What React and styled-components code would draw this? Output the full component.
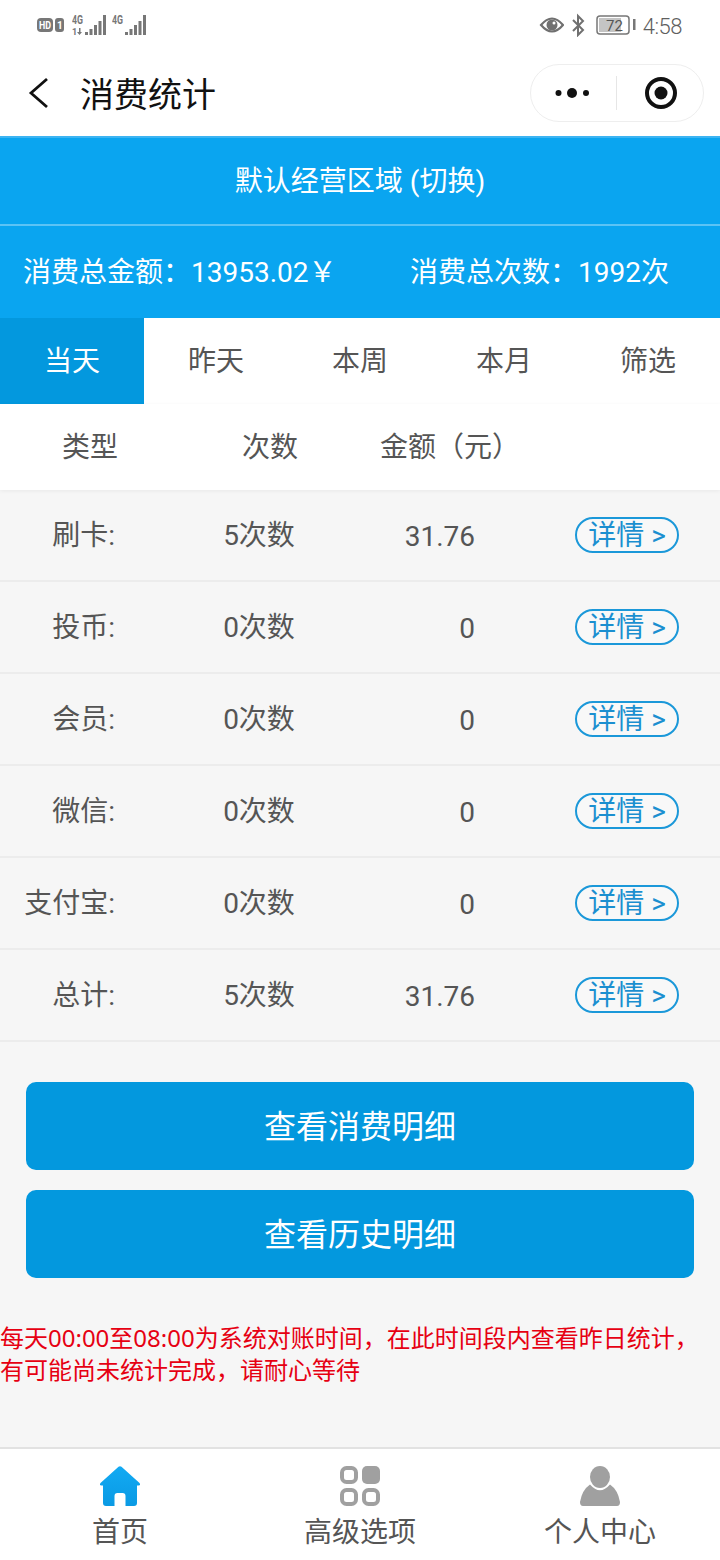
import styled, { createGlobalStyle } from 'styled-components';

const GlobalStyle = createGlobalStyle`
	html, body {
		margin: 0;
		padding: 0;
		background: #f6f6f6;
	}
	* {
		box-sizing: border-box;
	}
`;

const FONT = `Roboto, "Noto Sans CJK SC", sans-serif`;

const rows = [
	{ label: '刷卡:', count: '5次数', amount: '31.76' },
	{ label: '投币:', count: '0次数', amount: '0' },
	{ label: '会员:', count: '0次数', amount: '0' },
	{ label: '微信:', count: '0次数', amount: '0' },
	{ label: '支付宝:', count: '0次数', amount: '0' },
	{ label: '总计:', count: '5次数', amount: '31.76' },
];

const tabs = ['当天', '昨天', '本周', '本月', '筛选'];

const Page = styled.div`
	width: 720px;
	height: 1560px;
	display: flex;
	flex-direction: column;
	font-family: ${FONT};
	background: #f6f6f6;
	overflow: hidden;
`;

const StatusBar = styled.div`
	height: 50px;
	padding: 12px 38px 0 36px;
	display: flex;
	justify-content: space-between;
	align-items: flex-start;
	background: #fff;
	color: #6f6f6f;
`;

const StatusGroup = styled.div`
	display: flex;
	align-items: center;
	gap: ${(p) => p.$gap}px;
	height: 26px;
`;

const Clock = styled.span`
	font-size: 22px;
	font-weight: 300;
	letter-spacing: -0.5px;
	color: #5f5f5f;
	margin-top: 3px;
`;

const NavBar = styled.div`
	height: 86px;
	display: flex;
	align-items: center;
	padding: 0 16px 0 28px;
	background: #fff;
`;

const NavTitle = styled.div`
	margin-left: 28px;
	padding-bottom: 2px;
	font-size: 34px;
	color: #111;
	flex: 1;
`;

const Capsule = styled.div`
	width: 174px;
	height: 58px;
	border: 1px solid #eee;
	border-radius: 29px;
	display: flex;
	align-items: center;
	background: #fff;
`;

const CapsuleSide = styled.div`
	flex: 1;
	display: flex;
	align-items: center;
	justify-content: center;
	height: 34px;
	padding-left: ${(p) => (p.$divided ? 2 : 0)}px;
	border-left: ${(p) => (p.$divided ? '1px solid #e6e6e6' : 'none')};
`;

const RegionBar = styled.div`
	height: 88px;
	border-top: 2px solid #3db4f2;
	padding-bottom: 4px;
	display: flex;
	align-items: center;
	justify-content: center;
	background: #0aa5f0;
	color: #fff;
	font-size: 28px;
`;

const Totals = styled.div`
	height: 94px;
	border-top: 2px solid #5cc3f5;
	padding: 0 51px 4px 23px;
	display: flex;
	align-items: center;
	justify-content: space-between;
	background: #0aa5f0;
	color: #fff;
	font-size: 28px;
`;

const TabRow = styled.div`
	height: 86px;
	display: flex;
	background: #fff;
`;

const Tab = styled.div`
	flex: 1;
	padding-bottom: 4px;
	display: flex;
	align-items: center;
	justify-content: center;
	font-size: 28px;
	color: ${(p) => (p.$active ? '#fff' : '#555')};
	background: ${(p) => (p.$active ? '#0398de' : '#fff')};
`;

const TableHead = styled.div`
	height: 86px;
	padding-bottom: 4px;
	display: flex;
	align-items: center;
	background: #fff;
	font-size: 28px;
	color: #555;
	box-shadow: 0 1px 4px rgba(0, 0, 0, 0.06);
	position: relative;
`;

const HeadCell = styled.div`
	width: 180px;
	text-align: center;
`;

const Row = styled.div`
	height: 92px;
	display: flex;
	align-items: center;
	border-bottom: 2px solid #ececec;
	font-size: 28px;
	color: #555;
`;

const RowLabel = styled.div`
	width: 115px;
	padding-bottom: 4px;
	text-align: right;
`;

const RowCount = styled.div`
	width: 288px;
	padding-bottom: 4px;
	text-align: center;
`;

const RowAmount = styled.div`
	width: 72px;
	padding-top: 2px;
	text-align: right;
`;

const DetailButton = styled.div`
	width: 104px;
	height: 36px;
	margin-left: 100px;
	border: 2px solid #1b98d9;
	border-radius: 18px;
	padding-bottom: 4px;
	display: flex;
	align-items: center;
	justify-content: center;
	color: #1b8fd0;
	font-size: 28px;
	white-space: nowrap;
	background: #f8f8f8;
`;

const Actions = styled.div`
	display: flex;
	flex-direction: column;
	gap: 20px;
	padding: 40px 26px 0;
`;

const ActionButton = styled.div`
	height: 88px;
	border-radius: 10px;
	padding-bottom: 4px;
	background: #0398de;
	color: #fff;
	font-size: 32px;
	display: flex;
	align-items: center;
	justify-content: center;
`;

const Notice = styled.div`
	margin-top: 44px;
	font-family: "Noto Sans", "Noto Sans CJK SC", sans-serif;
	color: #e60012;
	font-size: 24px;
	line-height: 32px;
	flex: 1;
`;

const Footer = styled.div`
	height: 113px;
	border-top: 2px solid #e2e2e2;
	display: flex;
	background: #fff;
`;

const FooterItem = styled.div`
	flex: 1;
	display: flex;
	flex-direction: column;
	align-items: center;
	padding-top: 16px;
	font-size: 28px;
	color: #555;
`;

const FooterLabel = styled.div`
	line-height: 40px;
	margin-top: 6px;
`;

const SignalIcon = ({ dual }) => (
	<svg width="34" height="24" viewBox="0 0 34 24">
		<text x="0" y="11" fontSize="12" fontFamily="Roboto" fontWeight="700" fill="#777" textLength="11" lengthAdjust="spacingAndGlyphs">
			4G
		</text>
		{dual && (
			<>
				<text x="0" y="22" fontSize="9" fontFamily="Roboto" fontWeight="700" fill="#777">
					1
				</text>
				<path d="M7 15 V19 H5 L7.5 22 L10 19 H8.5 V15 Z" fill="#777" />
			</>
		)}
		<g fill="#777">
			<rect x="13" y="19" width="3" height="3" />
			<rect x="17.5" y="16" width="3" height="6" />
			<rect x="22" y="12" width="3" height="10" />
			<rect x="26.5" y="8" width="3" height="14" />
			<rect x="31" y="2" width="3" height="20" />
		</g>
	</svg>
);

const HomeIcon = () => (
	<svg width="42" height="42" viewBox="0 0 42 42">
		<defs>
			<linearGradient id="homeFill" x1="0" y1="0" x2="0" y2="1">
				<stop offset="0" stopColor="#12aaf3" />
				<stop offset="1" stopColor="#0a9ae4" />
			</linearGradient>
		</defs>
		<path
			d="M19.5 1.8 Q21 0.8 22.5 1.8 L40.5 18 Q42 20.5 39.5 20.5 L38 20.5 L38 38 Q38 41 35 41 L26.5 41 L26.5 31 Q26.5 28 23.5 28 L18.5 28 Q15.5 28 15.5 31 L15.5 41 L7 41 Q4 41 4 38 L4 20.5 L2.5 20.5 Q0 20.5 1.5 18 Z"
			fill="url(#homeFill)"
		/>
	</svg>
);

const GridIcon = () => (
	<svg width="42" height="42" viewBox="0 0 42 42" fill="none" stroke="#a0a0a0" strokeWidth="4">
		<rect x="3" y="3" width="14" height="14" rx="4.5" />
		<rect x="23" y="1" width="18" height="18" rx="5" fill="#a0a0a0" stroke="none" />
		<rect x="3" y="25" width="14" height="14" rx="4.5" />
		<rect x="25" y="25" width="14" height="14" rx="4.5" />
	</svg>
);

const UserIcon = () => (
	<svg width="42" height="42" viewBox="0 0 42 42" fill="#a0a0a0">
		<ellipse cx="21" cy="12" rx="10" ry="11" />
		<path d="M11 19.5 Q21 31 31 19.5 Q39 25 41 37 Q41 41 38 41 L4 41 Q1 41 1 37 Q3 25 11 19.5 Z" />
	</svg>
);

const App = () => (
	<Page>
		<GlobalStyle />
		<StatusBar>
			<StatusGroup $gap={6}>
				<svg width="30" height="16" viewBox="0 0 30 16">
					<rect x="1" y="1" width="16" height="14" rx="4" fill="#777" />
					<text x="3" y="12" fontSize="10" fontFamily="Roboto" fontWeight="700" fill="#fff" textLength="12" lengthAdjust="spacingAndGlyphs">
						HD
					</text>
					<rect x="19" y="1" width="9" height="14" rx="3" fill="#777" />
					<text x="21" y="12" fontSize="10" fontFamily="Roboto" fontWeight="700" fill="#fff">
						1
					</text>
				</svg>
				<SignalIcon dual />
				<SignalIcon />
			</StatusGroup>
			<StatusGroup $gap={7}>
				<svg width="26" height="20" viewBox="0 0 26 20">
					<path d="M3 10 Q14 -3 25 10 Q14 23 3 10 Z" fill="none" stroke="#707070" strokeWidth="2.2" />
					<circle cx="14" cy="10" r="5.5" fill="#707070" />
					<circle cx="16" cy="8" r="1.5" fill="#fff" />
				</svg>
				<svg width="18" height="24" viewBox="0 0 18 24" fill="none" stroke="#707070" strokeWidth="2">
					<path d="M2 7 L12 17 L7 22 L7 3 L12 8 L2 18" />
				</svg>
				<svg width="40" height="20" viewBox="0 0 40 20">
					<rect x="1" y="1" width="32" height="18" rx="3" fill="none" stroke="#777" strokeWidth="1.5" />
					<rect x="3" y="3" width="22" height="14" fill="#c4c4c4" />
					<text x="10" y="15.5" fontSize="15" fontFamily="Roboto" fill="#555">
						72
					</text>
					<rect x="37" y="4" width="2.5" height="11" fill="#777" />
				</svg>
				<Clock>4:58</Clock>
			</StatusGroup>
		</StatusBar>

		<NavBar>
			<svg width="24" height="32" viewBox="0 0 24 32" fill="none" stroke="#111" strokeWidth="2.8">
				<path d="M19 2 L3 16 L19 30" />
			</svg>
			<NavTitle>消费统计</NavTitle>
			<Capsule>
				<CapsuleSide>
					<svg width="36" height="12" viewBox="0 0 36 12" fill="#111">
						<circle cx="3.5" cy="6" r="3" />
						<circle cx="17" cy="6" r="5" />
						<circle cx="31" cy="6" r="3" />
					</svg>
				</CapsuleSide>
				<CapsuleSide $divided>
					<svg width="32" height="32" viewBox="0 0 32 32">
						<circle cx="16" cy="16" r="14" fill="none" stroke="#111" strokeWidth="4" />
						<circle cx="16" cy="16" r="6.5" fill="#111" />
					</svg>
				</CapsuleSide>
			</Capsule>
		</NavBar>

		<RegionBar>默认经营区域 (切换)</RegionBar>
		<Totals>
			<span>消费总金额：13953.02￥</span>
			<span>消费总次数：1992次</span>
		</Totals>

		<TabRow>
			{tabs.map((tab, i) => (
				<Tab key={tab} $active={i === 0}>
					{tab}
				</Tab>
			))}
		</TabRow>

		<TableHead>
			<HeadCell>类型</HeadCell>
			<HeadCell>次数</HeadCell>
			<HeadCell>金额（元）</HeadCell>
		</TableHead>

		{rows.map((row) => (
			<Row key={row.label}>
				<RowLabel>{row.label}</RowLabel>
				<RowCount>{row.count}</RowCount>
				<RowAmount>{row.amount}</RowAmount>
				<DetailButton>详情 &gt;</DetailButton>
			</Row>
		))}

		<Actions>
			<ActionButton>查看消费明细</ActionButton>
			<ActionButton>查看历史明细</ActionButton>
		</Actions>

		<Notice>每天00:00至08:00为系统对账时间，在此时间段内查看昨日统计，有可能尚未统计完成，请耐心等待</Notice>

		<Footer>
			<FooterItem>
				<HomeIcon />
				<FooterLabel>首页</FooterLabel>
			</FooterItem>
			<FooterItem>
				<GridIcon />
				<FooterLabel>高级选项</FooterLabel>
			</FooterItem>
			<FooterItem>
				<UserIcon />
				<FooterLabel>个人中心</FooterLabel>
			</FooterItem>
		</Footer>
	</Page>
);

export default App;
